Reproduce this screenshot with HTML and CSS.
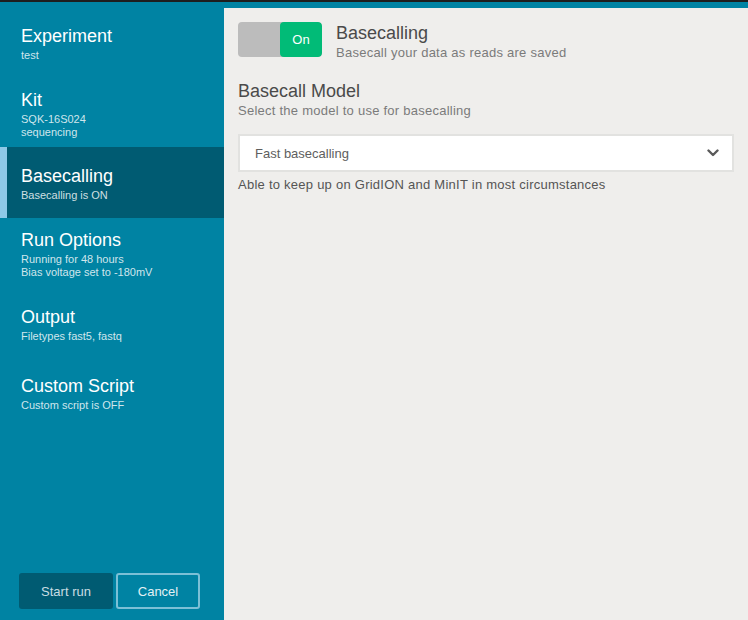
FILE: index.html
```html
<!DOCTYPE html>
<html>
<head>
<meta charset="utf-8">
<link rel="stylesheet" href="styles.css">
</head>
<body>
<div class="app">
  <aside class="sidebar">
    <nav class="nav">
      <div class="item">
        <div class="item-title">Experiment</div>
        <div class="item-sub">test</div>
      </div>
      <div class="item">
        <div class="item-title">Kit</div>
        <div class="item-sub">SQK-16S024<br>sequencing</div>
      </div>
      <div class="item active">
        <div class="item-title">Basecalling</div>
        <div class="item-sub">Basecalling is ON</div>
      </div>
      <div class="item">
        <div class="item-title">Run Options</div>
        <div class="item-sub">Running for 48 hours<br>Bias voltage set to -180mV</div>
      </div>
      <div class="item item-output">
        <div class="item-title">Output</div>
        <div class="item-sub">Filetypes fast5, fastq</div>
      </div>
      <div class="item">
        <div class="item-title">Custom Script</div>
        <div class="item-sub">Custom script is OFF</div>
      </div>
    </nav>
    <div class="actions">
      <button class="btn btn-start">Start run</button>
      <button class="btn btn-cancel">Cancel</button>
    </div>
  </aside>
  <main class="content">
    <div class="toggle-row">
      <div class="toggle">
        <span class="toggle-off"></span>
        <span class="toggle-on">On</span>
      </div>
      <div class="toggle-text">
        <div class="title">Basecalling</div>
        <div class="sub">Basecall your data as reads are saved</div>
      </div>
    </div>
    <div class="section">
      <div class="title">Basecall Model</div>
      <div class="sub">Select the model to use for basecalling</div>
    </div>
    <div class="select">
      <span class="select-value">Fast basecalling</span>
      <svg class="chevron" width="12" height="8" viewBox="0 0 12 8"><path d="M1.5 1.5 L6 6 L10.5 1.5" fill="none" stroke="#5a5a5a" stroke-width="2.4" stroke-linecap="round" stroke-linejoin="round"/></svg>
    </div>
    <div class="help">Able to keep up on GridION and MinIT in most circumstances</div>
  </main>
</div>
</body>
</html>
```

FILE: styles.css
```css
html, body {
  margin: 0;
  padding: 0;
  background: #0083a3;
}
body {
  font-family: "Liberation Sans", Arial, sans-serif;
  width: 748px;
  height: 620px;
  overflow: hidden;
}
.app {
  display: flex;
  height: 618px;
  border-top: 2px solid #1e1e1e;
  background: #0083a3;
}
.sidebar {
  width: 224px;
  flex: 0 0 224px;
  display: flex;
  flex-direction: column;
  justify-content: space-between;
  color: #fff;
}
.nav {
  padding-top: 10px;
}
.item {
  padding: 12px 21px 14px;
}
.item-title {
  font-size: 18px;
  line-height: 24px;
  color: #fff;
}
.item-sub {
  margin-top: 1px;
  font-size: 11px;
  line-height: 13px;
  color: rgba(255,255,255,0.82);
}
.item.active {
  background: #005b72;
  border-left: 7px solid #8ec9e7;
  padding: 17px 21px 16px 14px;
  margin: -6px 0 -2px;
}
.item-output {
  padding-bottom: 19px;
}
.actions {
  display: flex;
  gap: 3px;
  padding: 0 0 11px 19px;
}
.btn {
  font-family: "Liberation Sans", Arial, sans-serif;
  font-size: 13px;
  height: 36px;
  border-radius: 3px;
  box-sizing: border-box;
  cursor: pointer;
}
.btn-start {
  width: 94px;
  background: #005b72;
  border: none;
  color: #c9dde3;
}
.btn-cancel {
  width: 84px;
  background: transparent;
  border: 2px solid #7cc0d6;
  color: #e3f1f5;
}
.content {
  flex: 1;
  margin-top: 6px;
  background: #efeeec;
  padding: 14px 14px 0;
  color: #4a4a4a;
}
.toggle-row {
  display: flex;
  align-items: flex-start;
  gap: 14px;
}
.toggle {
  display: flex;
  width: 84px;
  height: 35px;
  border-radius: 4px;
  overflow: hidden;
  background: #bcbcbc;
}
.toggle-off {
  flex: 1;
}
.toggle-on {
  width: 42px;
  background: #01bb77;
  border-radius: 4px;
  color: #fff;
  font-size: 13px;
  display: flex;
  align-items: center;
  justify-content: center;
}
.title {
  font-size: 18px;
  line-height: 22px;
  color: #4a4a4a;
}
.sub {
  margin-top: 1px;
  font-size: 13px;
  line-height: 16px;
  letter-spacing: 0.25px;
  color: #7b7b7b;
}
.section {
  margin-top: 19px;
}
.select {
  margin-top: 15px;
  height: 38px;
  box-sizing: border-box;
  border: 2px solid #e2e2e0;
  background: #fff;
  display: flex;
  align-items: center;
  justify-content: space-between;
  padding: 0 13px 0 15px;
}
.select-value {
  font-size: 13px;
  color: #5e5e5e;
}
.help {
  margin-top: 5px;
  font-size: 13px;
  line-height: 16px;
  letter-spacing: 0.25px;
  color: #555;
}
```
